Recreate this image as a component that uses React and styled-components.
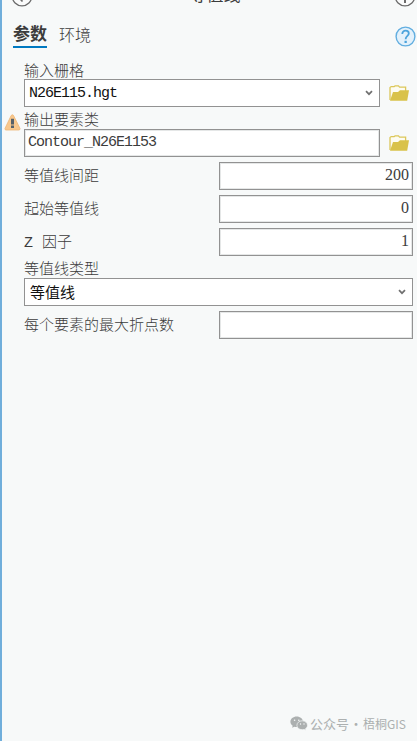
import styled, { createGlobalStyle } from "styled-components";

const FolderIcon = () => (
  <svg width="20" height="16" viewBox="0 0 20 16">
    <path
      d="M1 15V2.6L2.2 1.6H5.2L6.2 .8H9.4L10.6 2.2H16.6V6"
      fill="#fdfcf2"
      stroke="#dcc75a"
      strokeWidth="1.3"
    />
    <path d="M1 15.7L4 7H9L11 5.2H20L18.2 15.7Z" fill="#d9c24a" />
  </svg>
);

const WarningIcon = () => (
  <svg width="17" height="17" viewBox="0 0 17 17">
    <path
      d="M7.3 1.3Q8.4 .2 9.4 1.3L16 14.4Q16.2 15.9 15 16H1.9Q.7 15.9 1 14.4Z"
      fill="#f9c88d"
      stroke="#efb676"
      strokeWidth=".8"
    />
    <path d="M7 4.8H10V10.6H7ZM7 11.6H10V14H7Z" fill="#57616a" />
  </svg>
);

const ChevronIcon = () => (
  <svg width="8" height="6" viewBox="0 0 8 6">
    <path d="M1 1.2L4 4.2L7 1.2" fill="none" stroke="#707070" strokeWidth="1.7" />
  </svg>
);

const HelpIcon = () => (
  <svg width="21" height="21" viewBox="0 0 21 21">
    <circle cx="10.5" cy="10.5" r="9.4" fill="#e3f1fb" stroke="#62aee0" strokeWidth="1.4" />
    <path
      d="M7.3 7.9C7.3 5.9 8.6 4.7 10.6 4.7S13.8 5.9 13.8 7.5C13.8 9.8 10.6 10 10.6 13.2"
      fill="none"
      stroke="#4ba3dc"
      strokeWidth="1.8"
    />
    <path d="M9.5 14.8H11.8V17H9.5Z" fill="#4ba3dc" />
  </svg>
);

const BackIcon = () => (
  <svg width="22" height="22" viewBox="0 0 22 22">
    <circle cx="11" cy="11" r="9.8" fill="#fafbfb" stroke="#6b6b6b" strokeWidth="1.3" />
    <path d="M16 11H6.5M11.5 6L6.5 11L11.5 16.5" fill="none" stroke="#6b6b6b" strokeWidth="1.6" />
  </svg>
);

const AddIcon = () => (
  <svg width="22" height="22" viewBox="0 0 22 22">
    <circle cx="11" cy="11" r="9.8" fill="#fafbfb" stroke="#6b6b6b" strokeWidth="1.3" />
    <path d="M11 5V18M5.5 11H16.5" fill="none" stroke="#6b6b6b" strokeWidth="2" />
  </svg>
);

const WechatIcon = () => (
  <svg width="18" height="15" viewBox="0 0 18 15">
    <path
      d="M6.7 .5C3.1 .5 .4 2.8 .4 5.7C.4 7.4 1.3 8.8 2.7 9.8L2.1 11.8L4.4 10.7C5.1 10.9 5.9 11 6.7 11C10.2 11 13 8.6 13 5.7S10.2 .5 6.7 .5Z"
      fill="#acb0b0"
    />
    <path
      d="M12.2 4.8C9.2 4.8 6.9 6.8 6.9 9.3S9.2 13.7 12.2 13.7C12.9 13.7 13.5 13.6 14.1 13.4L16 14.3L15.5 12.7C16.8 11.9 17.5 10.7 17.5 9.3C17.5 6.8 15.2 4.8 12.2 4.8Z"
      fill="#acb0b0"
      stroke="#f7f9f9"
      strokeWidth=".7"
    />
    <g fill="#f7f9f9">
      <circle cx="4.6" cy="4.2" r=".8" />
      <circle cx="8.8" cy="4.2" r=".8" />
      <circle cx="10.5" cy="8" r=".7" />
      <circle cx="14" cy="8" r=".7" />
    </g>
  </svg>
);

const App = () => {
  return (
    <Panel>
      <GlobalStyle />
      <Header>
        <BackIcon />
        <Title>等值线</Title>
        <AddIcon />
      </Header>
      <Tabs>
        <Tab $active>参数</Tab>
        <Tab>环境</Tab>
        <Help>
          <HelpIcon />
        </Help>
      </Tabs>
      <Form>
        <Label>输入栅格</Label>
        <FileRow>
          <Select>
            N26E115.hgt
            <ChevronIcon />
          </Select>
          <FolderIcon />
        </FileRow>
        <WarningLabel>
          <WarningIcon />
          <Label>输出要素类</Label>
        </WarningLabel>
        <FileRow>
          <Field>Contour_N26E1153</Field>
          <FolderIcon />
        </FileRow>
        <Row>
          <Label>等值线间距</Label>
          <NumberField>200</NumberField>
        </Row>
        <Row>
          <Label>起始等值线</Label>
          <NumberField>0</NumberField>
        </Row>
        <Row>
          <Label>Z 因子</Label>
          <NumberField>1</NumberField>
        </Row>
        <TypeLabel>等值线类型</TypeLabel>
        <Select $cjk>
          等值线
          <ChevronIcon />
        </Select>
        <Row>
          <Label>每个要素的最大折点数</Label>
          <NumberField />
        </Row>
      </Form>
      <Footer>
        <WechatIcon />
        <span>公众号</span>
        <Dot>·</Dot>
        <Account>梧桐GIS</Account>
      </Footer>
    </Panel>
  );
};

const GlobalStyle = createGlobalStyle`
  body {
    margin: 0;
    overflow: hidden;
  }
  *, *::before {
    box-sizing: border-box;
  }
  svg {
    display: block;
    flex-shrink: 0;
  }
`;

const Panel = styled.div`
  display: flex;
  flex-direction: column;
  width: 417px;
  height: 741px;
  overflow: hidden;
  background-color: #f7f9f9;
  border-left: 2px solid #70aedb;
  color: #3c3c3c;
  font-family: "Liberation Mono", "Noto Sans CJK SC", monospace;
  font-weight: 300;
`;

const Header = styled.div`
  display: flex;
  justify-content: space-between;
  flex-shrink: 0;
  height: 22px;
  width: 414px;
  margin-top: -15px;
  padding-left: 9px;
`;

const Title = styled.div`
  margin: 2px 0 0 3px;
  font-size: 17px;
  font-weight: 400;
  line-height: 20px;
`;

const Tabs = styled.div`
  display: flex;
  align-items: flex-start;
  gap: 12px;
  height: 41px;
  margin-top: 15px;
  padding-left: 11px;
`;

const Tab = styled.div`
  height: 26px;
  font-size: ${(props) => (props.$active ? "17px" : "16px")};
  font-weight: ${(props) => (props.$active ? 700 : 300)};
  line-height: ${(props) => (props.$active ? "28px" : "30px")};
  border-bottom: 2px solid ${(props) => (props.$active ? "#0079c1" : "transparent")};
`;

const Help = styled.div`
  margin: 4px 1px 0 auto;
`;

const Form = styled.div`
  display: flex;
  flex-direction: column;
  flex: 1;
  padding: 0 4px 0 22px;
`;

const Label = styled.div`
  height: 16px;
  font-size: 15px;
  line-height: 20px;
  white-space: pre;
`;

const WarningLabel = styled.div`
  display: flex;
  align-items: flex-start;
  gap: 3px;
  height: 22px;
  margin-left: -20px;
  padding-top: 5px;

  svg {
    margin-top: 2px;
  }
`;

const TypeLabel = styled(Label)`
  height: 22px;
  padding-top: 5px;
`;

const FileRow = styled.div`
  display: flex;
  align-items: center;
  gap: 9px;
  padding-right: 4px;
`;

const Field = styled.div`
  flex: 1;
  height: 28px;
  padding: 2px 3px;
  background-color: #fff;
  border: 1px solid #929292;
  box-shadow: inset 0 0 0 1px #e5e7e7;
  font-size: 15px;
  letter-spacing: -1px;
  line-height: 22px;
`;

const Select = styled.div`
  display: flex;
  align-items: center;
  justify-content: space-between;
  flex: ${(props) => (props.$cjk ? "none" : 1)};
  height: 28px;
  padding: 0 6px 0 ${(props) => (props.$cjk ? "5px" : "4px")};
  background-color: #fff;
  border: 1px solid #929292;
  color: #111;
  font-size: 15px;
  font-weight: ${(props) => (props.$cjk ? 400 : 300)};
  letter-spacing: ${(props) => (props.$cjk ? "0" : "-1px")};
`;

const Row = styled.div`
  display: flex;
  align-items: center;
  justify-content: space-between;
  height: 28px;
  margin-top: 5px;
`;

/* serif digits are half an em wide and have a plain zero */
const NumberField = styled(Field)`
  flex: none;
  width: 194px;
  font-family: "Liberation Serif", serif;
  font-size: 16px;
  letter-spacing: 0;
  line-height: 19px;
  text-align: right;
`;

const Footer = styled.div`
  display: flex;
  align-items: center;
  justify-content: flex-start;
  height: 36px;
  padding-left: 288px;
  color: #acb0b0;
  font-family: "Noto Sans CJK SC", sans-serif;
  font-size: 13px;
  font-weight: 400;

  svg {
    margin-right: 2px;
  }
`;

const Dot = styled.span`
  width: 14px;
  text-align: center;
`;

const Account = styled.span`
  font-size: 12px;
`;

export default App;
